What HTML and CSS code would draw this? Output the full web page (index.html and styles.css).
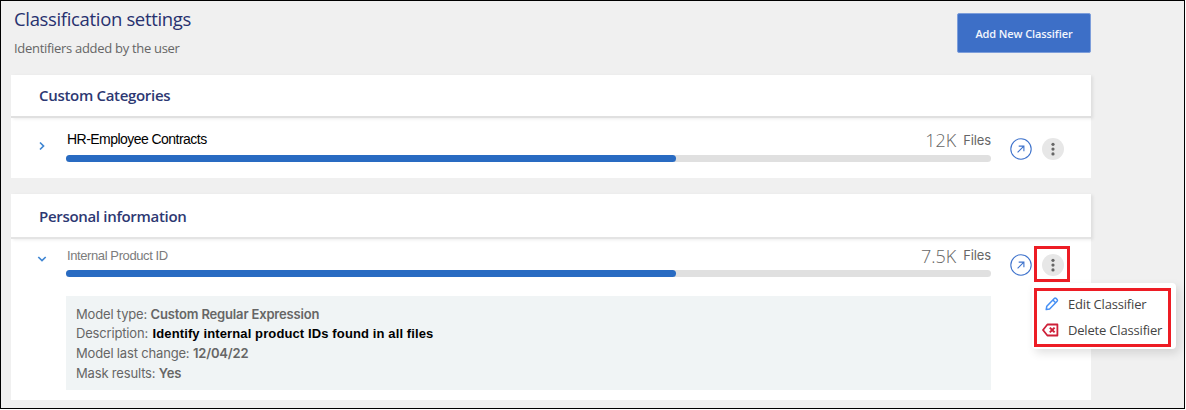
FILE: index.html
```html
<!DOCTYPE html>
<html lang="en">
<head>
<meta charset="utf-8">
<title>Classification settings</title>
<link rel="stylesheet" href="styles.css">
</head>
<body>
<main class="page">
  <header class="top">
    <div class="heading">
      <h1 class="title"><span>Classification settings</span></h1>
      <p class="subtitle"><span>Identifiers added by the user</span></p>
    </div>
    <button class="add"><span>Add New Classifier</span></button>
  </header>

  <section class="card card-custom">
    <h2 class="card-head"><span>Custom Categories</span></h2>
    <div class="row">
      <svg class="chevron" width="8" height="10" viewBox="0 0 8 10"><path d="M2 1.5 5.5 5 2 8.5"/></svg>
      <div class="meter">
        <div class="labels"><span class="name name-dark">HR-Employee Contracts</span><span class="count">12K</span><span class="unit">Files</span></div>
        <div class="track"><div class="fill"></div></div>
      </div>
      <div class="actions">
        <svg class="open" width="22" height="22" viewBox="0 0 22 22"><circle cx="11" cy="11" r="10.2"/><path d="M7.6 14.4 13.6 8.4M8.7 8.1h5.2v5.2"/></svg>
        <svg class="dots" width="22" height="22" viewBox="0 0 22 22"><circle class="disc" cx="11" cy="11" r="11"/><circle cx="11" cy="6.3" r="1.6"/><circle cx="11" cy="11.1" r="1.6"/><circle cx="11" cy="15.9" r="1.6"/></svg>
      </div>
    </div>
  </section>

  <section class="card card-personal">
    <h2 class="card-head"><span>Personal information</span></h2>
    <div class="row">
      <svg class="chevron chevron-down" width="10" height="8" viewBox="0 0 10 8"><path d="M1.3 2 5 5.5 8.7 2"/></svg>
      <div class="meter">
        <div class="labels"><span class="name name-light">Internal Product ID</span><span class="count">7.5K</span><span class="unit">Files</span></div>
        <div class="track"><div class="fill"></div></div>
      </div>
      <div class="actions">
        <svg class="open" width="22" height="22" viewBox="0 0 22 22"><circle cx="11" cy="11" r="10.2"/><path d="M7.6 14.4 13.6 8.4M8.7 8.1h5.2v5.2"/></svg>
        <div class="anchor">
          <svg class="dots" width="22" height="22" viewBox="0 0 22 22"><circle class="disc" cx="11" cy="11" r="11"/><circle cx="11" cy="6.3" r="1.6"/><circle cx="11" cy="11.1" r="1.6"/><circle cx="11" cy="15.9" r="1.6"/></svg>
          <div class="ring"></div>
          <div class="menu">
            <div class="menu-list">
              <div class="item">
                <svg width="17" height="16" viewBox="0 0 17 16"><path class="pen" d="M4.2 13.6 4.8 10.2 12.3 2.4Q13.1 1.6 14 2.4L15.1 3.5Q15.9 4.3 15.1 5.2L7.6 12.9ZM10.9 4l2.7 2.7"/></svg>
                <span>Edit Classifier</span>
              </div>
              <div class="item">
                <svg width="17" height="16" viewBox="0 0 17 16"><path class="del" d="M5.4 2.5h10v11h-10L1 8Z"/><path class="del-x" d="m7.8 5.6 4.8 4.8m0-4.8-4.8 4.8"/></svg>
                <span>Delete Classifier</span>
              </div>
            </div>
          </div>
        </div>
      </div>
    </div>
    <div class="details">
      <p>Model type: <b>Custom Regular Expression</b></p>
      <p>Description: <b class="desc">Identify internal product IDs found in all files</b></p>
      <p>Model last change: <b>12/04/22</b></p>
      <p>Mask results: <b>Yes</b></p>
    </div>
  </section>
</main>
</body>
</html>
```
FILE: styles.css
```css
* { box-sizing: border-box; }
body { margin: 0; background: #fff; font-family: "Open Sans", sans-serif; overflow: hidden; }
h1, h2, p { margin: 0; }
svg { display: block; flex: none; }
.page { width: 1185px; height: 409px; border: 1px solid #000; background: #f0f0f0; padding: 0 93px 0 10px; }

.top { display: flex; justify-content: space-between; height: 74px; padding: 6px 0 0 3px; white-space: nowrap; }
.title { font-size: 18.5px; font-weight: 400; line-height: 24px; color: #27316f; letter-spacing: -0.34px; }
.subtitle { margin-top: 7px; font-size: 13px; line-height: 20px; color: #666; letter-spacing: -0.3px; }
.add { width: 134px; height: 40px; margin-top: 6px; padding: 1px 0 0; border: 1px solid #7d9edb; border-radius: 2px; background: #3d6fc7; color: #f2f6fd; font: 600 11px/20px "Open Sans", sans-serif; letter-spacing: -0.1px; white-space: nowrap; }

.card { background: #fff; }
.card-custom { height: 103px; }
.card-personal { height: 206px; margin-top: 16px; }
.card-head { height: 43px; padding: 0 28px; border-bottom: 2px solid #e0e0e0; font-size: 15px; font-weight: 600; line-height: 41px; letter-spacing: -0.31px; color: #2d3872; box-shadow: 2px 1px 3px rgba(0,0,0,.08); white-space: nowrap; }
.card-personal .card-head { height: 45px; line-height: 44px; border-bottom-color: #e4e4e4; }
.row { display: flex; height: 60px; }
.card-personal .row { height: 57px; }
.chevron { width: 8px; margin: 23px 20px 0 27px; fill: none; stroke: #3f86d3; stroke-width: 1.7; }
.chevron-down { width: 10px; margin: 16px 19.5px 0 25.5px; }
.meter { width: 925px; padding-top: 10px; }
.card-personal .meter { padding-top: 5px; }
.labels { display: flex; height: 27px; align-items: flex-start; white-space: nowrap; }
.card-personal .labels { height: 26px; }
.name { margin: 1px auto 0 1px; font-family: "Liberation Sans", sans-serif; line-height: 20px; }
.name-dark { font-size: 14px; letter-spacing: -0.54px; color: #000; }
.name-light { margin-top: 2px; font-size: 13px; color: #7c7c7c; letter-spacing: -0.4px; }
.count { margin-top: 1px; font-size: 18px; font-weight: 300; line-height: 22px; color: #666; }
.unit { margin: 2px 0 0 7px; font: 400 13px/20px Inter, sans-serif; letter-spacing: -0.15px; color: #666; }
.track { height: 7px; border-radius: 4px; background: #e0e0e0; }
.fill { width: 610px; height: 7px; border-radius: 4px; background: #296bc2; }
.actions { display: flex; gap: 10px; padding: 20px 0 0 19px; }
.card-personal .actions { padding-top: 15px; }
.card-personal .unit { margin-top: 1px; }
.open { fill: none; stroke: #3f73cc; stroke-width: 1.1; }
.dots { fill: #666; }
.disc { fill: #e7e7e7; }

.anchor { position: relative; }
.ring { position: absolute; left: -8px; top: -8px; width: 36px; height: 36px; border: 3px solid #ed1c24; }
.menu { position: absolute; left: -10px; top: 29px; width: 144px; height: 66px; padding: 5px 5px 2px 2px; border-radius: 4px; background: #fff; box-shadow: 3px 4px 10px rgba(0,0,0,.12); }
.menu-list { height: 59px; border: 3px solid #ed1c24; padding: 0 0 0 5px; }
.item { display: flex; height: 26px; align-items: center; gap: 9px; font-size: 13px; line-height: 20px; letter-spacing: -0.18px; color: #444; white-space: nowrap; }
.pen { fill: none; stroke: #458ff4; stroke-width: 1.5; stroke-linejoin: round; }
.del { fill: none; stroke: #ce2038; stroke-width: 1.8; stroke-linejoin: round; }
.del-x { fill: none; stroke: #ce2038; stroke-width: 2; }

.details { width: 925px; height: 94px; margin-left: 55px; padding: 8.6px 10px 0; background: #f0f4f5; font: 400 13px/19.8px Inter, sans-serif; letter-spacing: -0.17px; color: #666; white-space: nowrap; }
.details p { height: 19.8px; }
.details b { font-weight: 600; }
.details .desc { margin-left: 1px; font: 700 13px/18px "Liberation Sans", sans-serif; letter-spacing: 0.12px; color: #000; }
```
